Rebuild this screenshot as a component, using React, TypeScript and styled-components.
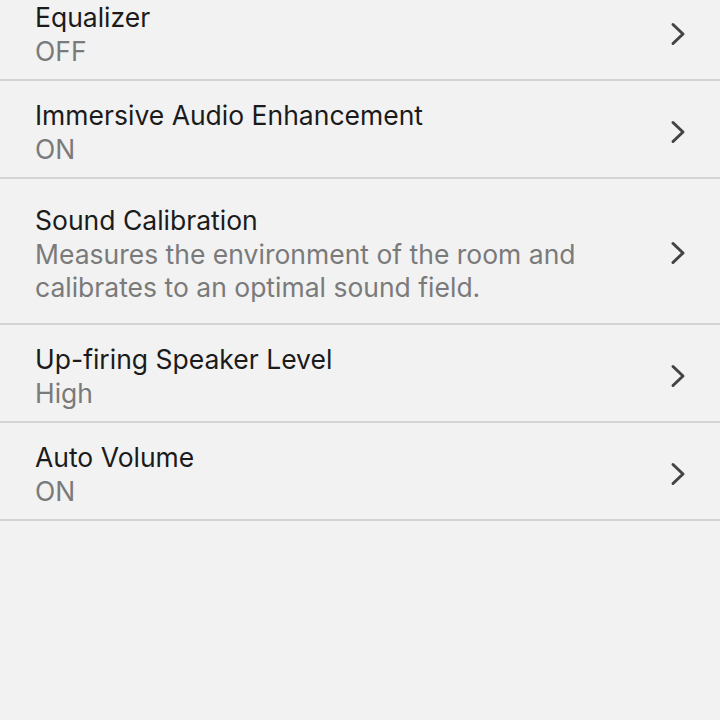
import React from "react";
import styled, { createGlobalStyle } from "styled-components";

const GlobalStyle = createGlobalStyle`
  html, body {
    margin: 0;
    padding: 0;
    background: #f2f2f2;
  }
  body {
    font-family: Inter, "Noto Sans", "Liberation Sans", sans-serif;
    -webkit-font-smoothing: antialiased;
  }
`;

const Screen = styled.div`
  width: 720px;
  height: 720px;
  overflow: hidden;
  background: #f2f2f2;
`;

const List = styled.ul`
  list-style: none;
  margin: -17px 0 0;
  padding: 0;
`;

const Row = styled.li<{ $tall?: boolean }>`
  display: flex;
  align-items: center;
  justify-content: space-between;
  padding: ${(p) => (p.$tall ? "23px 34px 19px 35px" : "16px 34px 11px 35px")};
  border-bottom: 2px solid #d4d4d4;
`;

const Texts = styled.div`
  display: flex;
  flex-direction: column;
`;

const Title = styled.p`
  margin: 0;
  font-size: 26.5px;
  line-height: 36px;
  color: #1b1b1b;
`;

const Sub = styled.p`
  margin: 0;
  font-size: 26.5px;
  line-height: 33px;
  color: #7a7a7a;
  white-space: pre-line;
`;

const Chevron = styled.svg`
  flex: none;
  width: 16px;
  height: 24px;
`;

interface Item {
  title: string;
  sub: string;
  tall?: boolean;
}

const items: Item[] = [
  { title: "Equalizer", sub: "OFF" },
  { title: "Immersive Audio Enhancement", sub: "ON" },
  {
    title: "Sound Calibration",
    sub: "Measures the environment of the room and\ncalibrates to an optimal sound field.",
    tall: true,
  },
  { title: "Up-firing Speaker Level", sub: "High" },
  { title: "Auto Volume", sub: "ON" },
];

function App() {
  return (
    <Screen>
      <GlobalStyle />
      <List>
        {items.map((item) => (
          <Row key={item.title} $tall={item.tall}>
            <Texts>
              <Title>{item.title}</Title>
              <Sub>{item.sub}</Sub>
            </Texts>
            <Chevron viewBox="0 0 16 24">
              <path
                d="M3 2.5 L13 12 L3 21.5"
                fill="none"
                stroke="#434343"
                strokeWidth="3"
                strokeLinecap="round"
                strokeLinejoin="round"
              />
            </Chevron>
          </Row>
        ))}
      </List>
    </Screen>
  );
}

export default App;
